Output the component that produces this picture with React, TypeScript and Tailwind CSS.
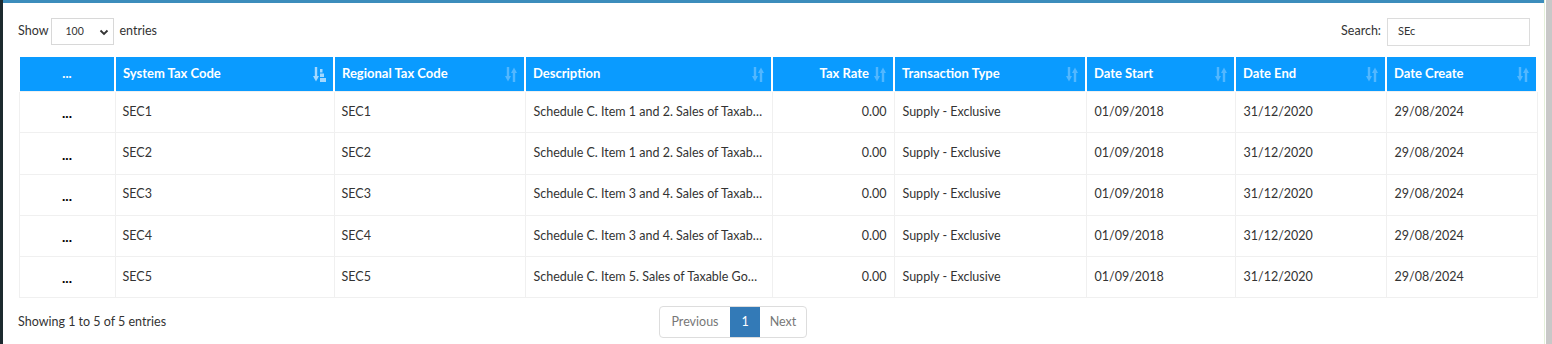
import React from "react";

type Row = {
  sys: string;
  reg: string;
  desc: string;
  rate: string;
  type: string;
  start: string;
  end: string;
  created: string;
};

const rows: Row[] = [
  { sys: "SEC1", reg: "SEC1", desc: "Schedule C. Item 1 and 2. Sales of Taxable Goods", rate: "0.00", type: "Supply - Exclusive", start: "01/09/2018", end: "31/12/2020", created: "29/08/2024" },
  { sys: "SEC2", reg: "SEC2", desc: "Schedule C. Item 1 and 2. Sales of Taxable Goods", rate: "0.00", type: "Supply - Exclusive", start: "01/09/2018", end: "31/12/2020", created: "29/08/2024" },
  { sys: "SEC3", reg: "SEC3", desc: "Schedule C. Item 3 and 4. Sales of Taxable Goods", rate: "0.00", type: "Supply - Exclusive", start: "01/09/2018", end: "31/12/2020", created: "29/08/2024" },
  { sys: "SEC4", reg: "SEC4", desc: "Schedule C. Item 3 and 4. Sales of Taxable Goods", rate: "0.00", type: "Supply - Exclusive", start: "01/09/2018", end: "31/12/2020", created: "29/08/2024" },
  { sys: "SEC5", reg: "SEC5", desc: "Schedule C. Item 5. Sales of Taxable Goods", rate: "0.00", type: "Supply - Exclusive", start: "01/09/2018", end: "31/12/2020", created: "29/08/2024" },
];

// two arrows side by side: down on the left, up on the right
function SortIcon() {
  return (
    <svg width="12" height="15" viewBox="0 0 12 15" fill="#52b7ff">
      <rect x="1.8" y="0" width="2.4" height="10" />
      <polygon points="0,9 6,9 3,14.5" />
      <rect x="7.8" y="5" width="2.4" height="10" />
      <polygon points="6,6 12,6 9,0.5" />
    </svg>
  );
}

// sorted ascending: down arrow plus stacked bars
function SortedIcon() {
  return (
    <svg width="13" height="15" viewBox="0 0 13 15" fill="#a3d8ff">
      <rect x="1.8" y="0" width="2.4" height="10" />
      <polygon points="0,9 6,9 3,14.5" />
      <rect x="7" y="2" width="2.5" height="3.5" />
      <rect x="7" y="6.5" width="4" height="3.5" />
      <rect x="7" y="11" width="6" height="4" />
    </svg>
  );
}

const cols = [
  { label: "...", w: "w-[96px]", align: "center" },
  { label: "System Tax Code", w: "w-[219px]", align: "left", sorted: true },
  { label: "Regional Tax Code", w: "w-[191px]", align: "left" },
  { label: "Description", w: "w-[247px]", align: "left" },
  { label: "Tax Rate", w: "w-[122px]", align: "right" },
  { label: "Transaction Type", w: "w-[192px]", align: "left" },
  { label: "Date Start", w: "w-[149px]", align: "left" },
  { label: "Date End", w: "w-[151px]", align: "left" },
  { label: "Date Create", w: "w-[151px]", align: "left" },
];

export default function App() {
  return (
    <div
      className="flex h-[344px] w-[1552px] overflow-hidden bg-white text-[12.5px] text-[#333]"
      style={{ fontFamily: "Lato, 'Liberation Sans', sans-serif" }}
    >
      <div className="w-[3px] shrink-0 bg-[#1c2a2f]" />

      <div className="flex w-[1541px] shrink-0 flex-col border-t-[3px] border-[#3c8dbc] pl-[15px] pr-[8px]">
        {/* length + search */}
        <div className="flex h-[55px] items-center justify-between pt-[3px]">
          <div className="flex items-center">
            <span>Show</span>
            <div className="ml-[3px] mr-[5px] flex h-[27px] w-[63px] items-center justify-between border border-[#d8d8d8] pl-[13px] pr-[4px]">
              <span className="text-[10.5px]">100</span>
              <svg width="10" height="10" viewBox="0 0 10 10" fill="none" stroke="#333" strokeWidth="1.8">
                <path d="M1.5 3.5 L5 7 L8.5 3.5" />
              </svg>
            </div>
            <span>entries</span>
          </div>
          <div className="mr-[6px] flex items-center">
            <span className="mr-[6px]">Search:</span>
            <div className="flex h-[28px] w-[143px] items-center border border-[#dcdcdc] pl-[10px] text-[11px]">
              SEc
            </div>
          </div>
        </div>

        {/* table */}
        <table className="w-[1518px] table-fixed border-collapse">
          <thead>
            <tr className="h-[34px] bg-[#0a9bff] text-[13px] text-white">
              {cols.map((c) => (
                <th
                  key={c.label}
                  className={`${c.w} border-x-2 border-white px-[7px] font-bold`}
                >
                  {c.label === "..." ? (
                    <div className="text-center">...</div>
                  ) : (
                    <div className="flex items-center justify-between">
                      {c.align === "right" ? (
                        <>
                          <span className="flex-1 pr-[5px] text-right">{c.label}</span>
                          <SortIcon />
                        </>
                      ) : (
                        <>
                          <span>{c.label}</span>
                          {c.sorted ? <SortedIcon /> : <SortIcon />}
                        </>
                      )}
                    </div>
                  )}
                </th>
              ))}
            </tr>
          </thead>
          <tbody>
            {rows.map((r) => (
              <tr key={r.sys} className="h-[41.3px]">
                <td className="border border-[#f0f0f0] text-center align-middle">
                  <span className="relative top-[1px] text-[14px] font-bold text-black">...</span>
                </td>
                <td className="border border-[#f0f0f0] px-[7px]">{r.sys}</td>
                <td className="border border-[#f0f0f0] px-[7px]">{r.reg}</td>
                <td className="truncate border border-[#f0f0f0] px-[8px]">{r.desc}</td>
                <td className="border border-[#f0f0f0] px-[7px] text-right">{r.rate}</td>
                <td className="border border-[#f0f0f0] px-[8px]">{r.type}</td>
                <td className="border border-[#f0f0f0] px-[8px]">{r.start}</td>
                <td className="border border-[#f0f0f0] px-[8px]">{r.end}</td>
                <td className="border border-[#f0f0f0] px-[8px]">{r.created}</td>
              </tr>
            ))}
          </tbody>
        </table>

        {/* footer */}
        <div className="relative flex h-[46px] items-center">
          <span className="pt-[2px]">Showing 1 to 5 of 5 entries</span>
          <div className="absolute left-[641px] top-[8px] flex h-[32px] overflow-hidden rounded-[4px] border border-[#ddd]">
            <span className="flex w-[70px] items-center justify-center text-[#777]">Previous</span>
            <span className="flex w-[30px] items-center justify-center bg-[#337ab7] text-white">1</span>
            <span className="flex w-[46px] items-center justify-center text-[#777]">Next</span>
          </div>
        </div>
      </div>

      <div className="w-[1px] shrink-0 bg-[#e4f0da]" />
      <div className="w-[1px] shrink-0 bg-white" />
      <div className="flex-1 bg-[#c8c8c8]" />
    </div>
  );
}
